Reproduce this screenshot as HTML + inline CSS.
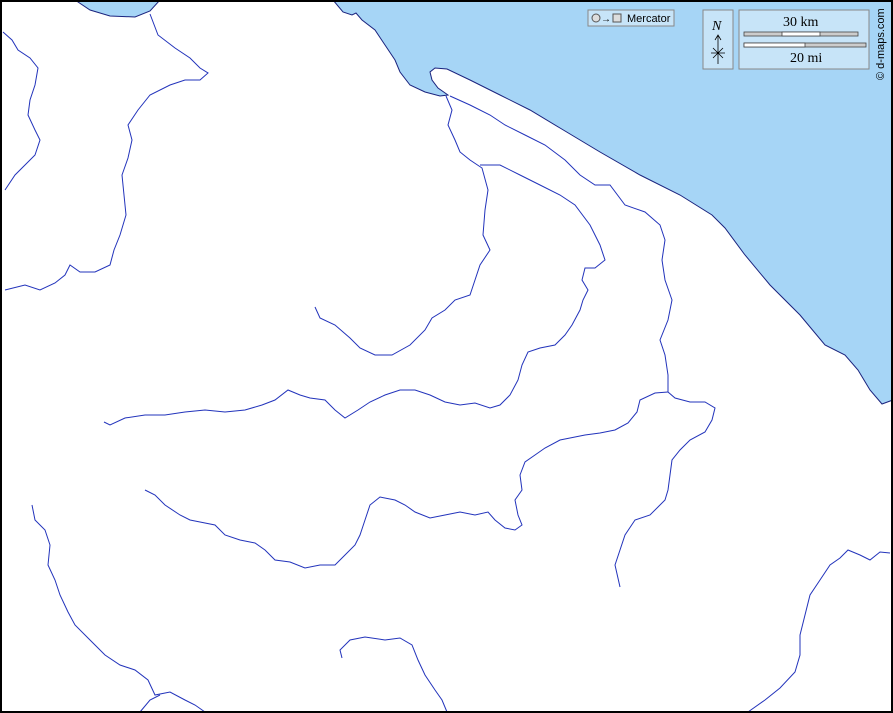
<!DOCTYPE html>
<html><head><style>
html,body{margin:0;padding:0;background:#fff}
svg{display:block}
</style></head><body>
<svg width="893" height="713" viewBox="0 0 893 713" xmlns="http://www.w3.org/2000/svg">
<rect width="893" height="713" fill="#fff"/>
<path d="M333,0 L343,12 L352,15 L356,13 L362,20 L375,30 L385,45 L395,60 L400,72 L410,85 L425,92 L440,96 L448,95 L438,88 L432,80 L430,72 L435,68 L447,69 L470,80 L500,95 L530,110 L560,128 L600,152 L640,175 L680,195 L712,215 L725,228 L745,255 L770,285 L800,315 L825,345 L845,355 L858,370 L870,390 L882,404 L893,400 L893,0 Z" fill="#a6d5f6" stroke="#1a237e" stroke-width="1"/>
<path d="M75,0 L90,10 L110,16 L135,17 L150,11 L160,0 Z" fill="#a6d5f6" stroke="#1a237e" stroke-width="1"/>
<g fill="none" stroke="#2233bb" stroke-width="1">
<path d="M150,14 L158,35 L175,48 L190,58 L200,68 L208,73 L200,80 L185,80 L170,85 L150,95 L138,110 L128,125 L132,140 L128,158 L122,175 L124,195 L126,215 L120,235 L114,250 L110,265 L95,272 L80,272 L70,265 L65,275 L55,283 L40,290 L25,285 L5,290"/>
<path d="M3,32 L12,40 L18,50 L30,58 L38,68 L35,85 L30,100 L28,115 L35,130 L40,140 L35,155 L25,165 L15,175 L5,190"/>
<path d="M446,96 L452,110 L448,125 L455,140 L460,152 L470,160 L482,168 L488,190 L485,210 L483,235 L490,250 L480,265 L475,280 L470,295 L455,300 L445,310 L432,318 L425,330 L410,345 L392,355 L375,355 L360,348 L350,338 L335,325 L320,318 L315,307"/>
<path d="M450,96 L470,105 L490,115 L505,125 L525,135 L545,145 L565,160 L580,175 L595,185 L610,185 L625,205 L645,212 L660,225 L665,240 L662,260 L665,280 L672,300 L668,320 L660,340 L665,355 L668,375 L668,392 L675,398 L690,402 L705,402 L715,408 L712,420 L705,432 L690,440 L680,450 L672,460 L670,475 L668,490 L665,500 L650,515 L635,520 L625,535 L620,550 L615,565 L620,587"/>
<path d="M480,165 L500,165 L520,175 L540,185 L560,195 L575,205 L590,225 L600,245 L605,260 L595,268 L585,268 L582,280 L588,290 L583,300 L580,310 L572,325 L565,335 L555,345 L540,348 L528,352 L522,365 L518,380 L510,395 L500,405 L490,408 L475,403 L460,405 L445,402 L430,395 L415,390 L400,390 L385,395 L370,402 L358,410 L345,418 L335,410 L325,400 L310,398 L300,395 L288,390 L275,400 L262,405 L245,410 L225,412 L205,410 L185,412 L165,415 L145,415 L125,418 L110,425 L104,422"/>
<path d="M668,392 L655,393 L640,400 L637,412 L628,423 L615,430 L600,433 L585,435 L570,438 L560,440 L545,448 L535,455 L525,462 L520,475 L522,490 L515,500 L518,515 L522,525 L515,530 L505,528 L495,520 L488,512 L475,515 L460,512 L445,515 L430,518 L415,512 L405,505 L395,500 L380,497 L370,505 L365,520 L360,535 L355,545 L345,555 L335,565 L320,565 L305,568 L290,562 L275,560 L265,550 L255,543 L240,540 L225,535 L215,525 L200,522 L190,520 L180,515 L165,505 L155,495 L145,490"/>
<path d="M32,505 L35,520 L45,530 L50,545 L48,565 L55,580 L60,595 L68,612 L75,625 L90,640 L105,655 L120,665 L135,670 L148,680 L155,695 L170,692 L185,700 L195,705 L205,712"/>
<path d="M140,712 L150,700 L160,695"/>
<path d="M342,658 L340,650 L350,640 L365,637 L385,640 L400,638 L412,645 L418,660 L425,675 L435,690 L442,700 L447,712"/>
<path d="M748,712 L765,700 L780,688 L795,672 L800,655 L800,635 L805,615 L810,595 L820,580 L830,565 L840,558 L848,550 L860,555 L870,560 L880,552 L890,553"/>
</g>
<rect x="1" y="1" width="891" height="711" fill="none" stroke="#000" stroke-width="2"/>
<g font-family="Liberation Serif, serif" fill="#000">
<rect x="588" y="10" width="86" height="16" fill="#c7e4f8" stroke="#888"/>
<circle cx="596" cy="18" r="4" fill="#ddd" stroke="#555"/>
<text x="601" y="22" font-size="10" font-family="Liberation Sans, sans-serif">→</text>
<rect x="613" y="14" width="8" height="8" fill="#ddd" stroke="#555"/>
<text x="627" y="22" font-size="11" font-family="Liberation Sans, sans-serif">Mercator</text>
<rect x="703" y="10" width="30" height="59" fill="#c7e4f8" stroke="#888"/>
<text x="712" y="30" font-size="14" font-style="italic">N</text>
<path d="M718,36 L718,64 M715,40 L718,35 L721,40 M711,53 L725,53 M713,48 L723,58 M723,48 L713,58" stroke="#000" fill="none" stroke-width="0.8"/>
<rect x="739" y="10" width="130" height="59" fill="#c7e4f8" stroke="#888"/>
<text x="783" y="26" font-size="14">30 km</text>
<rect x="744" y="32" width="114" height="4" fill="#ccc" stroke="#444" stroke-width="0.8"/>
<rect x="782" y="32" width="38" height="4" fill="#fff" stroke="#444" stroke-width="0.8"/>
<rect x="744" y="43" width="122" height="4" fill="#ccc" stroke="#444" stroke-width="0.8"/>
<rect x="744" y="43" width="61" height="4" fill="#fff" stroke="#444" stroke-width="0.8"/>
<text x="790" y="62" font-size="14">20 mi</text>
<text transform="translate(884,80) rotate(-90)" font-size="11" font-family="Liberation Sans, sans-serif">© d-maps.com</text>
</g>
</svg>
</body></html>
